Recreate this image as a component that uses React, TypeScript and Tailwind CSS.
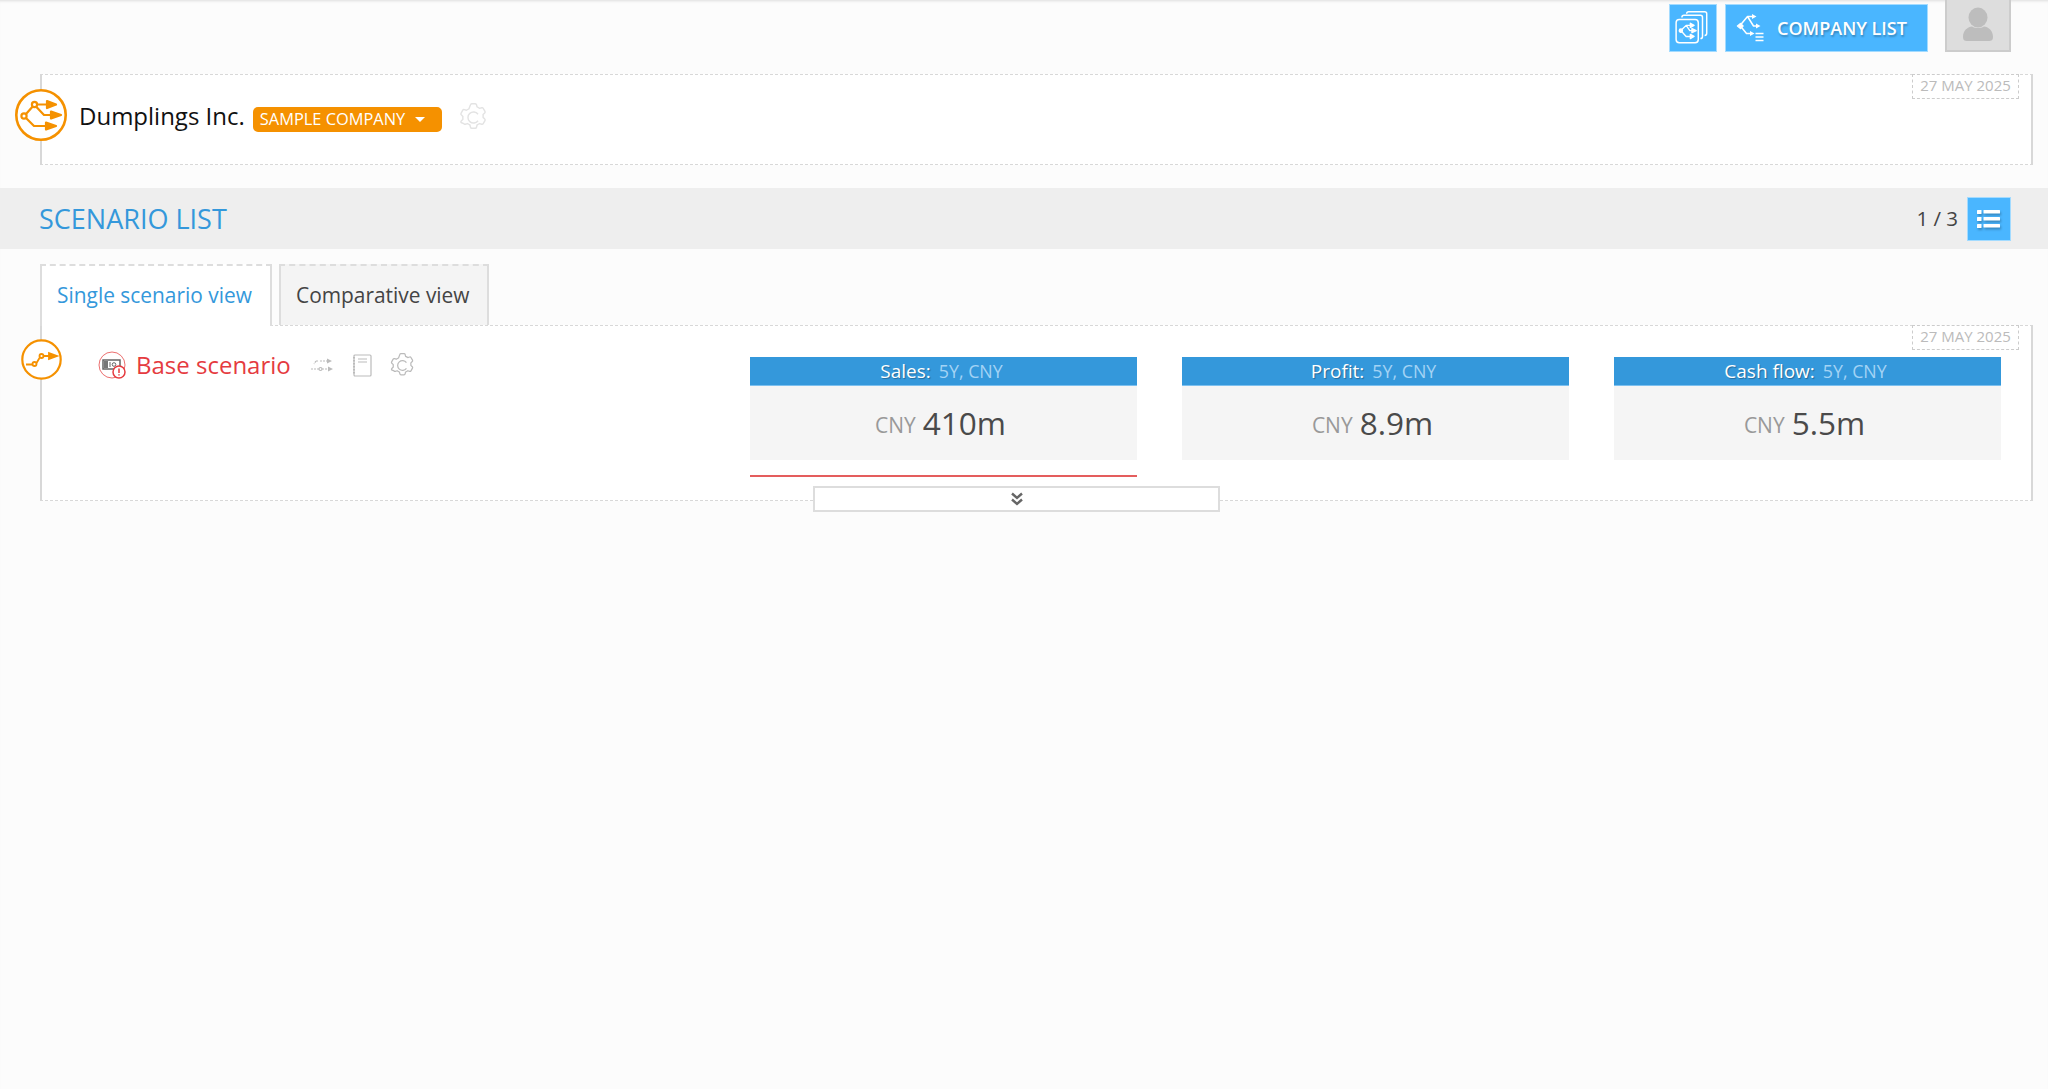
import React from "react";

const Gear = ({ size, color, className }: { size: number; color: string; className?: string }) => (
  <svg width={size} height={size} viewBox="0 0 24 24" fill="none" stroke={color} strokeWidth={1.1} strokeLinejoin="round" className={className}>
    <path d="M9.67 2.1 a1 1 0 0 1 .97-.75h2.72a1 1 0 0 1 .97.75l.42 1.73a8.6 8.6 0 0 1 1.9 1.1l1.72-.5a1 1 0 0 1 1.15.46l1.36 2.36a1 1 0 0 1-.18 1.22l-1.29 1.24a8.6 8.6 0 0 1 0 2.2l1.29 1.24a1 1 0 0 1 .18 1.22l-1.36 2.36a1 1 0 0 1-1.15.46l-1.72-.5a8.6 8.6 0 0 1-1.9 1.1l-.42 1.73a1 1 0 0 1-.97.75h-2.72a1 1 0 0 1-.97-.75l-.42-1.73a8.6 8.6 0 0 1-1.9-1.1l-1.72.5a1 1 0 0 1-1.15-.46L2.34 15.85a1 1 0 0 1 .18-1.22l1.29-1.24a8.6 8.6 0 0 1 0-2.2L2.52 9.95a1 1 0 0 1-.18-1.22L3.7 6.37a1 1 0 0 1 1.15-.46l1.72.5a8.6 8.6 0 0 1 1.9-1.1z" />
    <path d="M15.5 9.5a4.3 4.3 0 1 0 0 5" />
  </svg>
);

const BranchGlyph = ({ color }: { color: string }) => (
  <g stroke={color} fill="none" strokeWidth={2.2} strokeLinejoin="round">
    <circle cx="9" cy="27" r="2.6" />
    <circle cx="19.5" cy="15.5" r="2.6" />
    <path d="M11 25 17.7 17.5M21.5 15.5H33M21 17.500 29 26H36M11 29 19 37H32" />
    <path d="M32 12 41 15.5 32 19z" fill={color} />
    <path d="M36 22.5 46 26 36 29.5z" fill={color} />
    <path d="M31 33.5 41 37 31 40.5z" fill={color} />
  </g>
);

const CompanyLogo = () => (
  <svg width="52" height="52" viewBox="0 0 52 52" className="shrink-0">
    <circle cx="26" cy="26" r="24.700" fill="#fff" stroke="#f59100" strokeWidth="2.600" />
    <BranchGlyph color="#f59100" />
  </svg>
);

const ScenarioLogo = () => (
  <svg width="41" height="41" viewBox="0 0 41 41" className="shrink-0">
    <circle cx="20.5" cy="20.5" r="19.2" fill="#fff" stroke="#f59100" strokeWidth="2.200" />
    <g stroke="#f59100" strokeWidth="1.8" fill="none">
      <path d="M5 25.500H11.500M15.500 24 18.500 19M22.500 17H29" />
      <circle cx="13.500" cy="25" r="2" />
      <circle cx="20.500" cy="17" r="2" />
      <path d="M28 14 36 17 28 20z" fill="#f59100" />
    </g>
  </svg>
);

const CompaniesIcon = () => (
  <svg width="38" height="38" viewBox="0 0 36 36" fill="none" stroke="#fff" strokeWidth="1.400" strokeLinejoin="round">
    <path d="M12 4.500a2 2 0 0 1 2-2h15a2 2 0 0 1 2 2V23a2 2 0 0 1-2 2" />
    <path d="M7.500 8a2 2 0 0 1 2-2h15.500a2 2 0 0 1 2 2v18a2 2 0 0 1-2 2" />
    <rect x="2" y="10" width="21" height="22" rx="3" fill="#4ab6ff" />
    <g strokeWidth="1.300">
      <circle cx="6.500" cy="20.500" r="1.500" fill="#fff" />
      <path d="M7.500 19.500 11.500 15.500H17M11.500 15.500 15 20.500H19M7.500 21.500 11.500 26H17" />
      <path d="M15.500 13.500 19 15.500 15.500 17.500z M17 18.500 21 20.500 17 22.500z M15.500 24 19 26 15.500 28z" fill="#fff" />
    </g>
  </svg>
);

const CompanyListIcon = () => (
  <svg width="30" height="30" viewBox="0 0 30 30" fill="none" stroke="#fff" strokeWidth="1.500" strokeLinejoin="round">
    <path d="M4 12.500 11.500 3.500H17M11.500 3.500 17.500 13H21M4 12.500 10.500 20.500H15" />
    <path d="M1.500 13 4.500 10.500 7 13 4.500 15.500z" fill="#fff" />
    <path d="M16 1 20.500 3.500 16 6z M20 10.500 24.500 13 20 15.500z M14 18 18.500 20.500 14 23z" fill="#fff" stroke="none" />
    <path d="M19.500 20.500H27.500M19.500 24H27.500M19.500 27.500H27.500" strokeWidth="1.400" />
  </svg>
);

const ScenarioStatusIcon = () => (
  <svg width="28" height="28" viewBox="0 0 28 28" fill="none" className="shrink-0">
    <circle cx="14" cy="14" r="13" stroke="#ec7070" strokeWidth="1" />
    <rect x="5" y="9" width="17" height="9" fill="#fff" stroke="#666" strokeWidth="1.500" />
    <rect x="6" y="10" width="4" height="7" fill="#777" />
    <path d="M12 11v5" stroke="#666" />
    <circle cx="16" cy="13.500" r="1.800" stroke="#666" />
    <circle cx="21" cy="21" r="6" fill="#fff" stroke="#e53b3f" strokeWidth="1.500" />
    <path d="M21 17.500v4.500M21 23.300v1.200" stroke="#e53b3f" strokeWidth="1.500" />
  </svg>
);

const CompareIcon = () => (
  <svg width="22" height="16" viewBox="0 0 22 16" fill="none" stroke="#bbb" strokeWidth="1.200">
    <path d="M5 4h2.500M9 4h7M0 12h8M11 12h6M5 4 3 7" strokeDasharray="2 1" />
    <path d="M16 1.500 21 4 16 6.500z M17 9.500 22 12 17 14.500z" fill="#bbb" stroke="none" />
    <circle cx="9.500" cy="12" r="1.500" />
  </svg>
);

const NotebookIcon = () => (
  <svg width="19" height="23" viewBox="0 0 19 23" fill="none" stroke="#bbb" strokeWidth="1.200">
    <rect x="1" y="1" width="17" height="21" rx="1" />
    <path d="M5 5h9M5 8h9" />
    <path d="M1 3v17" strokeWidth="2" strokeDasharray="1.500 1.500" />
  </svg>
);

const ListIcon = () => (
  <svg width="24" height="20" viewBox="0 0 24 20" fill="#fff" className="drop-shadow-[1px_2px_1px_rgba(0,0,0,0.25)]">
    <rect x="0" y="1" width="4.500" height="4" rx="0.500" />
    <rect x="0" y="8" width="4.500" height="4" rx="0.500" />
    <rect x="0" y="15" width="4.500" height="4" rx="0.500" />
    <rect x="6.500" y="1" width="16.500" height="3.500" rx="0.500" />
    <rect x="6.500" y="8" width="16.500" height="3.500" rx="0.500" />
    <rect x="6.500" y="15" width="16.500" height="3.500" rx="0.500" />
  </svg>
);

const UserIcon = () => (
  <svg width="30" height="36" viewBox="0 0 30 36" fill="#bdbdbd">
    <ellipse cx="15" cy="10.500" rx="9.500" ry="10" />
    <path d="M0 30c0-7 5-10 9-10.500 3.500 2 8.500 2 12 0C25 20 30 23 30 30c0 3-1.500 4-4 4H4c-2.500 0-4-1-4-4z" />
  </svg>
);

const DateBadge = () => (
  <div className="absolute right-[12px] top-[-1px] flex h-[25px] w-[107px] items-center justify-center border border-dashed border-[#ccc] bg-white pb-[3px] text-[15px] text-[#bbb]">
    27 MAY 2025
  </div>
);

const Metric = ({ title, value, underline }: { title: string; value: string; underline?: boolean }) => (
  <div className="w-[387px] shrink-0">
    <div className="flex h-[29px] items-center justify-center gap-[8px] border-b border-[#7cc0ef] bg-[#3498db] pr-[4px] text-[19px] text-white [text-shadow:1px_1px_1px_rgba(0,0,0,0.3)]">
      <span>{title}</span>
      <span className="text-[17.800px] text-[#a3d3f5] [text-shadow:none]">5Y, CNY</span>
    </div>
    <div className="flex h-[74px] items-center justify-center gap-[7px] bg-[#f5f5f5] pr-[6px]">
      <span className="mt-[6px] text-[21px] text-[#999]">CNY</span>
      <span className="text-[31.500px] text-[#4a4a4a]">{value}</span>
    </div>
    {underline && <div className="mt-[15px] h-[2px] bg-[#e45d5d]" />}
  </div>
);

export default function App() {
  return (
    <div className="flex min-h-screen flex-col bg-[#fcfcfc] font-['Open_Sans',sans-serif] shadow-[inset_0_3px_3px_-2px_rgba(0,0,0,0.12)]">
      <header className="flex h-[74px] items-start justify-end pr-[37px]">
        <button className="mt-[4px] flex h-[48px] w-[48px] items-center justify-center border border-[#a3dbff] bg-[#4ab6ff]">
          <CompaniesIcon />
        </button>
        <button className="ml-[8px] mt-[4px] flex h-[48px] w-[203px] items-center border border-[#a3dbff] bg-[#4ab6ff] pl-[10px] text-[18px] font-semibold text-white [text-shadow:1px_2px_2px_rgba(0,0,0,0.25)]">
          <CompanyListIcon />
          <span className="ml-[11px]">COMPANY LIST</span>
        </button>
        <div className="ml-[17px] flex h-[52px] w-[66px] items-center justify-center border-x-2 border-b-2 border-[#ccc] bg-[#ddd]">
          <UserIcon />
        </div>
      </header>

      <section className="relative ml-[40px] mr-[15px] flex h-[91px] items-start border-2 border-y border-dashed border-[#d8d8d8] bg-white [border-left-style:solid] [border-right-style:solid]">
        <DateBadge />
        <div className="ml-[-27px] mt-[14px] flex items-center">
          <CompanyLogo />
          <span className="ml-[12px] mt-[2px] text-[24px] text-[#111]">Dumplings Inc.</span>
          <button className="ml-[8px] mt-[8px] flex h-[25px] w-[189px] items-center rounded-[5px] bg-[#f59100] pl-[7px] text-[16.400px] text-white">
            SAMPLE COMPANY
            <span className="ml-[10px] h-0 w-0 border-x-[5px] border-t-[5px] border-x-transparent border-t-white" />
          </button>
          <Gear size={31} color="#e3e3e3" className="ml-[16px] mt-[5px]" />
        </div>
      </section>

      <div className="mt-[23px] flex h-[61px] items-center bg-[#eeeeee] pl-[39px] pr-[37px]">
        <h2 className="mt-[2px] text-[27px] text-[#3498db]">SCENARIO LIST</h2>
        <span className="ml-auto text-[20.500px] text-[#444]">1 / 3</span>
        <button className="ml-[9px] flex h-[44px] w-[44px] items-center justify-center border border-[#a3dbff] bg-[#4ab6ff]">
          <ListIcon />
        </button>
      </div>

      <div className="relative z-10 ml-[40px] mt-[15px] flex h-[61px] items-start gap-[7px] text-[20.900px]">
        <div className="mb-[-1px] flex h-[62px] w-[232px] items-start border-2 border-b-0 border-dashed border-[#ddd] bg-white pl-[15px] pt-[14px] text-[#3498db] [border-left-style:solid] [border-right-style:solid]">
          Single scenario view
        </div>
        <div className="flex h-[61px] w-[210px] items-start border-2 border-b-0 border-dashed border-[#ddd] bg-[#f4f4f4] pl-[15px] pt-[14px] text-[#444] [border-left-style:solid] [border-right-style:solid]">
          Comparative view
        </div>
      </div>

      <section className="relative ml-[40px] mr-[15px] flex h-[176px] items-start border-2 border-y border-dashed border-[#d8d8d8] bg-white [border-left-style:solid] [border-right-style:solid]">
        <DateBadge />
        <div className="ml-[-21px] mt-[13px]">
          <ScenarioLogo />
        </div>
        <div className="ml-[36px] mt-[25px] flex items-center">
          <ScenarioStatusIcon />
          <span className="ml-[10px] text-[24px] leading-[28px] text-[#e53b3f]">Base scenario</span>
          <span className="ml-[20px]"><CompareIcon /></span>
          <span className="ml-[20px]"><NotebookIcon /></span>
          <Gear size={27} color="#bbb" className="ml-[17px]" />
        </div>
        <div className="absolute left-[708px] top-[31px] flex gap-[45px]">
          <Metric title="Sales:" value="410m" underline />
          <Metric title="Profit:" value="8.9m" />
          <Metric title="Cash flow:" value="5.5m" />
        </div>
        <button className="absolute bottom-[-12px] left-[771px] flex h-[26px] w-[407px] items-center justify-center border-2 border-[#ddd] bg-white">
          <svg width="14" height="14" viewBox="0 0 14 14" fill="none" stroke="#666" strokeWidth="2.400">
            <path d="M2 1.500 7 6 12 1.500M2 7.500 7 12 12 7.500" />
          </svg>
        </button>
      </section>
    </div>
  );
}
